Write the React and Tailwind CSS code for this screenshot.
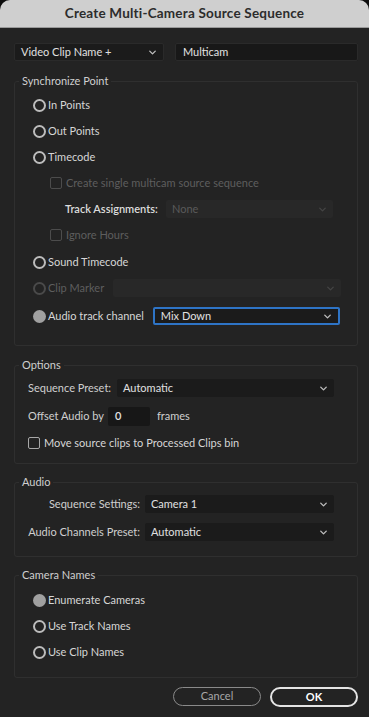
import { ChevronDown } from 'lucide-react';

const FONT = "font-['Lato',sans-serif]";

function Select({ value, className = '', disabled, focused }) {
  return (
    <div
      className={`h-[18px] shrink-0 flex items-center justify-between pl-[6px] pr-[5px] rounded-[2px] ${
        disabled ? 'bg-[#282828]' : 'bg-[#1b1b1b]'
      } ${focused ? 'border-2 border-[#2e74c6] pl-[5px] pr-[4px]' : ''} ${className}`}
    >
      <span className={`text-[11px] whitespace-nowrap ${disabled ? 'text-[#5a5a5a]' : 'text-[#e0e0e0]'}`}>{value}</span>
      <ChevronDown size={11} strokeWidth={3} className={disabled ? 'text-[#444]' : 'text-[#bdbdbd]'} />
    </div>
  );
}

function Radio({ label, state = 'off', children }) {
  const dot =
    state === 'on'
      ? 'bg-[#a0a0a0]'
      : state === 'disabled'
      ? 'border-2 border-[#4a4a4a]'
      : 'border-2 border-[#bcbcbc]';
  return (
    <div className="h-[26px] flex items-center pl-[18px]">
      <span className={`w-[13px] h-[13px] rounded-full shrink-0 ${dot}`} />
      <span
        className={`ml-[2px] text-[11px] whitespace-nowrap ${
          state === 'disabled' ? 'text-[#5e5e5e]' : 'text-[#d6d6d6]'
        }`}
      >
        {label}
      </span>
      {children}
    </div>
  );
}

function Check({ label, disabled }) {
  return (
    <div className="flex items-center">
      <span
        className={`w-[12px] h-[12px] rounded-[2px] border-[1.5px] shrink-0 ${
          disabled ? 'border-[#4c4c4c]' : 'border-[#a8a8a8]'
        }`}
      />
      <span className={`ml-[4px] text-[11px] whitespace-nowrap ${disabled ? 'text-[#5e5e5e]' : 'text-[#d6d6d6]'}`}>
        {label}
      </span>
    </div>
  );
}

function Group({ title, className = '', children }) {
  return (
    <fieldset className={`border border-[#2f2f2f] rounded-[3px] px-0 ${className}`}>
      <legend className="ml-[4px] px-[3px] text-[11px] leading-[14px] text-[#cfcfcf]">{title}</legend>
      {children}
    </fieldset>
  );
}

export default function App() {
  return (
    <div className={`w-[369px] h-[717px] bg-[#0e0e0e] overflow-hidden ${FONT}`}>
      <div className="h-full bg-[#232323] rounded-t-[10px] overflow-hidden flex flex-col">
        <div className="h-[28px] shrink-0 bg-[#cfcfcf] border-b border-[#9a9a9a] flex items-center justify-center">
          <span className="text-[13.5px] font-bold text-[#2c2c2c] tracking-[0.2px]">
            Create Multi-Camera Source Sequence
          </span>
        </div>

        <div className="pl-[14px] pr-[11px] pt-[15px] flex flex-col">
          <div className="flex items-center gap-[11px]">
            <Select value="Video Clip Name +" className="w-[150px] border border-[#2a2a2a]" />
            <div className="flex-1 h-[18px] bg-[#181818] rounded-[2px] border border-[#2a2a2a] flex items-center pl-[7px]">
              <span className="text-[11px] text-[#e2e2e2]">Multicam</span>
            </div>
          </div>

          <Group title="Synchronize Point" className="mt-[13px] pt-[4px] pb-[16px]">
            <Radio label="In Points" />
            <Radio label="Out Points" />
            <Radio label="Timecode" />
            <div className="h-[26px] flex items-center pl-[35px]">
              <Check label="Create single multicam source sequence" disabled />
            </div>
            <div className="h-[26px] flex items-center pl-[50px]">
              <span className="text-[11px] text-[#dcdcdc] font-semibold w-[101px] shrink-0 whitespace-nowrap">
                Track Assignments:
              </span>
              <Select value="None" disabled className="w-[167px]" />
            </div>
            <div className="h-[26px] flex items-center pl-[35px]">
              <Check label="Ignore Hours" disabled />
            </div>
            <div className="h-[1px]" />
            <Radio label="Sound Timecode" />
            <Radio label="Clip Marker" state="disabled">
              <Select value="" disabled className="ml-[9px] w-[228px]" />
            </Radio>
            <div className="h-[2px]" />
            <Radio label="Audio track channel" state="on">
              <Select value="Mix Down" focused className="ml-[9px] w-[187px]" />
            </Radio>
          </Group>

          <Group title="Options" className="mt-[12px] pt-[2px] pb-[8px]">
            <div className="h-[28px] flex items-center pl-[13px]">
              <span className="text-[11px] text-[#cfcfcf] w-[89px] shrink-0 whitespace-nowrap">Sequence Preset:</span>
              <Select value="Automatic" className="w-[217px]" />
            </div>
            <div className="h-[29px] flex items-center pl-[13px]">
              <span className="text-[11px] text-[#cfcfcf] w-[80px] shrink-0 whitespace-nowrap">Offset Audio by</span>
              <div className="w-[42px] h-[19px] shrink-0 bg-[#171717] rounded-[2px] flex items-center pl-[7px]">
                <span className="text-[11px] text-[#e2e2e2] font-semibold">0</span>
              </div>
              <span className="ml-[7px] text-[11px] text-[#cfcfcf]">frames</span>
            </div>
            <div className="h-[24px] flex items-center pl-[13px]">
              <Check label="Move source clips to Processed Clips bin" />
            </div>
          </Group>

          <Group title="Audio" className="mt-[11px] pt-[1px] pb-[10px]">
            <div className="h-[28px] flex items-center">
              <span className="w-[125px] shrink-0 text-right text-[11px] text-[#cfcfcf] whitespace-nowrap">
                Sequence Settings:
              </span>
              <Select value="Camera 1" className="ml-[5px] w-[189px]" />
            </div>
            <div className="h-[28px] flex items-center">
              <span className="w-[125px] shrink-0 text-right text-[11px] text-[#cfcfcf] whitespace-nowrap">
                Audio Channels Preset:
              </span>
              <Select value="Automatic" className="ml-[5px] w-[189px]" />
            </div>
          </Group>

          <Group title="Camera Names" className="mt-[11px] pt-[5px] pb-[12px]">
            <Radio label="Enumerate Cameras" state="on" />
            <Radio label="Use Track Names" />
            <Radio label="Use Clip Names" />
          </Group>

          <div className="mt-[9px] flex justify-end gap-[9px]">
            <button className="w-[88px] h-[19px] rounded-full border-[1.5px] border-[#8a8a8a] text-[11px] text-[#a8a8a8] flex items-center justify-center">
              Cancel
            </button>
            <button className="w-[88px] h-[20px] rounded-full border-2 border-[#e4e4e4] text-[11px] font-bold text-white flex items-center justify-center">
              OK
            </button>
          </div>
        </div>
      </div>
    </div>
  );
}
